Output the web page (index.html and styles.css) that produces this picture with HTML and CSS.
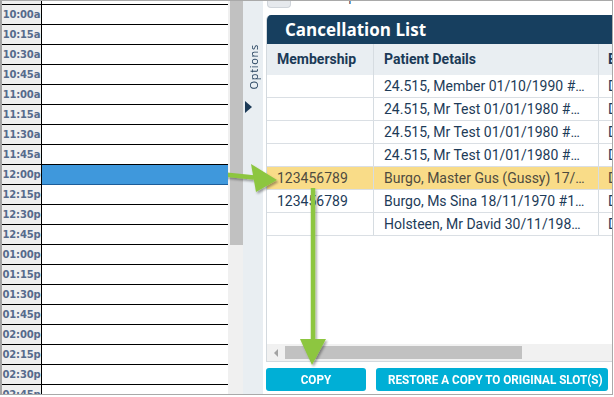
FILE: index.html
```html
<!DOCTYPE html>
<html lang="en">
<head>
  <meta charset="UTF-8" />
  <title>Cancellation List</title>
  <link rel="stylesheet" href="styles.css">
</head>
<body>
  <div class="frame">
    <div class="schedule">
      <div class="slot-row partial"><div class="time"></div><div class="slot"></div></div>
      <div class="slot-row"><div class="time">10:00a</div><div class="slot"></div></div>
      <div class="slot-row"><div class="time">10:15a</div><div class="slot"></div></div>
      <div class="slot-row"><div class="time">10:30a</div><div class="slot"></div></div>
      <div class="slot-row"><div class="time">10:45a</div><div class="slot"></div></div>
      <div class="slot-row"><div class="time">11:00a</div><div class="slot"></div></div>
      <div class="slot-row"><div class="time">11:15a</div><div class="slot"></div></div>
      <div class="slot-row"><div class="time">11:30a</div><div class="slot"></div></div>
      <div class="slot-row"><div class="time">11:45a</div><div class="slot"></div></div>
      <div class="slot-row"><div class="time">12:00p</div><div class="slot sel"></div></div>
      <div class="slot-row"><div class="time">12:15p</div><div class="slot"></div></div>
      <div class="slot-row"><div class="time">12:30p</div><div class="slot"></div></div>
      <div class="slot-row"><div class="time">12:45p</div><div class="slot"></div></div>
      <div class="slot-row"><div class="time">01:00p</div><div class="slot"></div></div>
      <div class="slot-row"><div class="time">01:15p</div><div class="slot"></div></div>
      <div class="slot-row"><div class="time">01:30p</div><div class="slot"></div></div>
      <div class="slot-row"><div class="time">01:45p</div><div class="slot"></div></div>
      <div class="slot-row"><div class="time">02:00p</div><div class="slot"></div></div>
      <div class="slot-row"><div class="time">02:15p</div><div class="slot"></div></div>
      <div class="slot-row"><div class="time">02:30p</div><div class="slot"></div></div>
      <div class="slot-row"><div class="time">02:45p</div><div class="slot"></div></div>
    </div>

    <div class="vscroll"><div class="vthumb"></div></div>

    <div class="options">
      <span class="options-label">Options</span>
      <span class="options-arrow"></span>
    </div>

    <div class="panel">
      <div class="toolbar">
        <span class="tab-stub"></span>
        <span class="cut-text">Group</span>
      </div>

      <div class="list-box">
        <div class="list-title">Cancellation List</div>
        <div class="list-body">
          <div class="list-row list-head">
            <div class="cell">Membership</div>
            <div class="cell">Patient Details</div>
            <div class="cell">Entered</div>
          </div>
          <div class="list-row">
            <div class="cell"></div>
            <div class="cell">24.515, Member 01/10/1990 #10023</div>
            <div class="cell">Dr Smith</div>
          </div>
          <div class="list-row">
            <div class="cell"></div>
            <div class="cell">24.515, Mr Test 01/01/1980 #10031</div>
            <div class="cell">Dr Smith</div>
          </div>
          <div class="list-row">
            <div class="cell"></div>
            <div class="cell">24.515, Mr Test 01/01/1980 #10031</div>
            <div class="cell">Dr Smith</div>
          </div>
          <div class="list-row">
            <div class="cell"></div>
            <div class="cell">24.515, Mr Test 01/01/1980 #10031</div>
            <div class="cell">Dr Smith</div>
          </div>
          <div class="list-row picked">
            <div class="cell">123456789</div>
            <div class="cell">Burgo, Master Gus (Gussy) 17/05/2010</div>
            <div class="cell">Dr Smith</div>
          </div>
          <div class="list-row">
            <div class="cell">123456789</div>
            <div class="cell">Burgo, Ms Sina 18/11/1970 #10044</div>
            <div class="cell">Dr Smith</div>
          </div>
          <div class="list-row">
            <div class="cell"></div>
            <div class="cell">Holsteen, Mr David 30/11/1985 #10052</div>
            <div class="cell">Dr Smith</div>
          </div>
        </div>
        <div class="hscroll">
          <span class="harrow"></span>
          <span class="hthumb"></span>
        </div>
      </div>

      <div class="actions">
        <button class="btn btn-copy"><span>Copy</span></button>
        <button class="btn btn-restore"><span>Restore a copy to original slot(s)</span></button>
      </div>
    </div>
  </div>

  <svg class="arrows" width="614" height="397" viewBox="0 0 614 397">
    <defs>
      <filter id="shade" x="-30%" y="-10%" width="160%" height="130%">
        <feDropShadow dx="1.5" dy="2" stdDeviation="1.2" flood-color="#000" flood-opacity="0.35"/>
      </filter>
    </defs>
    <g fill="#8dc63f" stroke="#8dc63f" filter="url(#shade)">
      <line x1="205" y1="172.5" x2="254" y2="177.5" stroke-width="4.5"/>
      <polygon points="251,164 277,180 256,192" stroke="none"/>
      <line x1="313" y1="188" x2="313" y2="342" stroke-width="4.5"/>
      <polygon points="300,339 326,339 312,365" stroke="none"/>
    </g>
  </svg>
</body>
</html>
```

FILE: styles.css
```css
* {
  box-sizing: border-box;
}
html, body {
  margin: 0;
  padding: 0;
}
body {
  width: 614px;
  height: 397px;
  background: #fff;
  font-family: Roboto, 'Liberation Sans', sans-serif;
  overflow: hidden;
  position: relative;
}
.frame {
  display: flex;
  width: 613px;
  height: 395px;
  border: 1px solid #a9a9a9;
  border-left: 2px solid #a4a4a4;
  overflow: hidden;
}

/* day schedule */
.schedule {
  width: 226px;
  flex: none;
  overflow: hidden;
}
.slot-row {
  display: flex;
  height: 20px;
  border-top: 1px solid #000;
}
.slot-row.partial {
  height: 3px;
  border-top: none;
}
.time {
  width: 40px;
  flex: none;
  background: #efefef;
  border-right: 1px solid #000;
  font: bold 10px 'DejaVu Sans', Verdana, sans-serif;
  letter-spacing: -0.2px;
  line-height: 19px;
  color: #566b8c;
  text-align: center;
}
.slot {
  flex: 1;
}
.slot.sel {
  background: #3f98dc;
  box-shadow: 0 1px 0 #1c5d99;
  position: relative;
  z-index: 1;
}
.vscroll {
  width: 15px;
  flex: none;
  background: #f0f0f0;
  padding-left: 2px;
}
.vthumb {
  width: 13px;
  height: 244px;
  background: #c1c1c1;
}

/* options rail */
.options {
  width: 20px;
  flex: none;
  background: #e9eef2;
  display: flex;
  flex-direction: column;
  align-items: center;
  padding-top: 43px;
}
.options-label {
  writing-mode: vertical-rl;
  transform: rotate(180deg);
  font: 11px 'Open Sans', sans-serif;
  letter-spacing: 0.7px;
  color: #223f5c;
}
.options-arrow {
  align-self: flex-start;
  margin: 11px 0 0 2px;
  width: 0;
  height: 0;
  border-left: 7px solid #1c3a57;
  border-top: 6.5px solid transparent;
  border-bottom: 6.5px solid transparent;
}

/* cancellation panel */
.panel {
  flex: 1;
  min-width: 0;
  padding-left: 3px;
  overflow: hidden;
  display: flex;
  flex-direction: column;
}
.toolbar {
  height: 14px;
  flex: none;
  display: flex;
  align-items: flex-start;
  overflow: hidden;
}
.tab-stub {
  width: 24px;
  height: 7px;
  margin-left: 1px;
  background: #e6e9ed;
  border: 1px solid #cfd4da;
  border-top: none;
  border-radius: 0 0 4px 4px;
}
.cut-text {
  margin: -10px 0 0 32px;
  font-size: 12px;
  line-height: 12px;
  color: #1b3a57;
}
.list-box {
  width: 430px;
  height: 347px;
  flex: none;
  display: flex;
  flex-direction: column;
  border-left: 1px solid #d3d9de;
  border-bottom: 1px solid #d3d9de;
  border-radius: 5px 0 0 0;
  overflow: hidden;
}
.list-title {
  height: 29px;
  flex: none;
  background: #173f5f;
  color: #fff;
  font: bold 17px 'Open Sans', sans-serif;
  line-height: 29px;
  padding-left: 18px;
}
.list-body {
  flex: 1;
  overflow: hidden;
}
.list-row {
  display: grid;
  grid-template-columns: 107px 225px 100px;
  height: 23px;
  border-bottom: 1px solid #dadfe4;
  font-size: 14px;
  line-height: 22px;
  color: #1d3b58;
}
.list-row .cell {
  padding: 0 10px;
  border-right: 1px solid #d6dce1;
  white-space: nowrap;
  overflow: hidden;
  text-overflow: ellipsis;
}
.list-row .cell:nth-child(2) {
  padding-right: 12px;
}
.list-row .cell:nth-child(3) {
  padding-left: 9px;
}
.list-head {
  height: 31px;
  line-height: 31px;
  border-bottom: none;
  background: #e9eef2;
  font-weight: bold;
  color: #1b3a57;
}
.list-row.picked {
  background: #f9dc88;
  color: #4e4b3f;
}
.hscroll {
  height: 17px;
  flex: none;
  display: flex;
  align-items: center;
  background: #f1f1f1;
  padding-left: 7px;
}
.harrow {
  width: 0;
  height: 0;
  border-right: 4px solid #a3a3a3;
  border-top: 4px solid transparent;
  border-bottom: 4px solid transparent;
}
.hthumb {
  width: 237px;
  height: 13px;
  margin-left: 7px;
  background: #c1c1c1;
}
.actions {
  display: flex;
  gap: 10px;
  padding-top: 6px;
}
.btn {
  height: 23px;
  padding: 0;
  border: none;
  border-radius: 3px;
  background: #00afd6;
  color: #fff;
  font: bold 13px Roboto, sans-serif;
  text-transform: uppercase;
  cursor: pointer;
}
.btn span {
  display: inline-block;
  transform: scaleX(0.9);
  white-space: nowrap;
}
.btn-copy {
  width: 100px;
}
.btn-restore {
  width: 232px;
}

.arrows {
  position: absolute;
  top: 0;
  left: 0;
  pointer-events: none;
}
```
